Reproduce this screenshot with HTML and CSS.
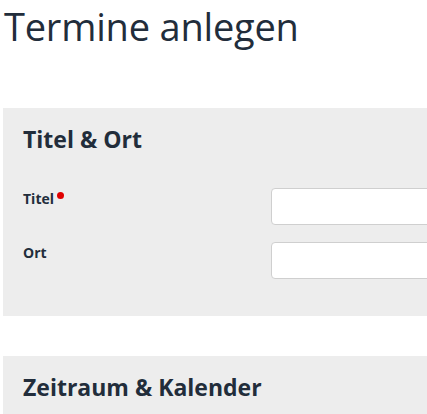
FILE: index.html
```html
<!DOCTYPE html>
<html lang="de">
<head>
<meta charset="utf-8">
<title>Termine anlegen</title>
<link rel="stylesheet" href="styles.css">
</head>
<body>
<main class="page">
  <h1 class="page-title">Termine anlegen</h1>
  <section class="panel">
    <h2 class="panel-title">Titel &amp; Ort</h2>
    <div class="field">
      <label class="field-label">Titel<span class="required"></span></label>
      <input class="field-input" type="text">
    </div>
    <div class="field">
      <label class="field-label">Ort</label>
      <input class="field-input" type="text">
    </div>
  </section>
  <section class="panel">
    <h2 class="panel-title">Zeitraum &amp; Kalender</h2>
  </section>
</main>
</body>
</html>
```
FILE: styles.css
```css
html, body {
  margin: 0;
  padding: 0;
  background: #fff;
  overflow: hidden;
}
body {
  font-family: "Open Sans", "Noto Sans", sans-serif;
  color: #222d3b;
}
.page {
  width: 760px;
  padding: 0 0 0 3px;
}
.page-title {
  margin: 0 0 0 1px;
  font-size: 38px;
  font-weight: 500;
  line-height: 52px;
  letter-spacing: -0.2px;
}
.panel {
  background: #ededed;
  margin-top: 56px;
  padding: 13px 20px 37px 20px;
}
.panel + .panel {
  margin-top: 40px;
}
.panel-title {
  margin: 0 0 31px 0;
  font-size: 23px;
  font-weight: 700;
  line-height: 36px;
}
.field {
  display: grid;
  grid-template-columns: 248px 1fr;
  margin-bottom: 17px;
}
.field:last-child {
  margin-bottom: 0;
}
.field-label {
  font-size: 14px;
  font-weight: 700;
  line-height: 19px;
  padding-top: 1px;
  display: flex;
  align-items: flex-start;
}
.required {
  width: 7px;
  height: 7px;
  border-radius: 50%;
  background: #e00000;
  margin: 3px 0 0 3px;
}
.field-input {
  height: 37px;
  box-sizing: border-box;
  border: 1px solid #cfcfcf;
  border-radius: 4px;
  background: #fff;
  margin: 0;
}
```
